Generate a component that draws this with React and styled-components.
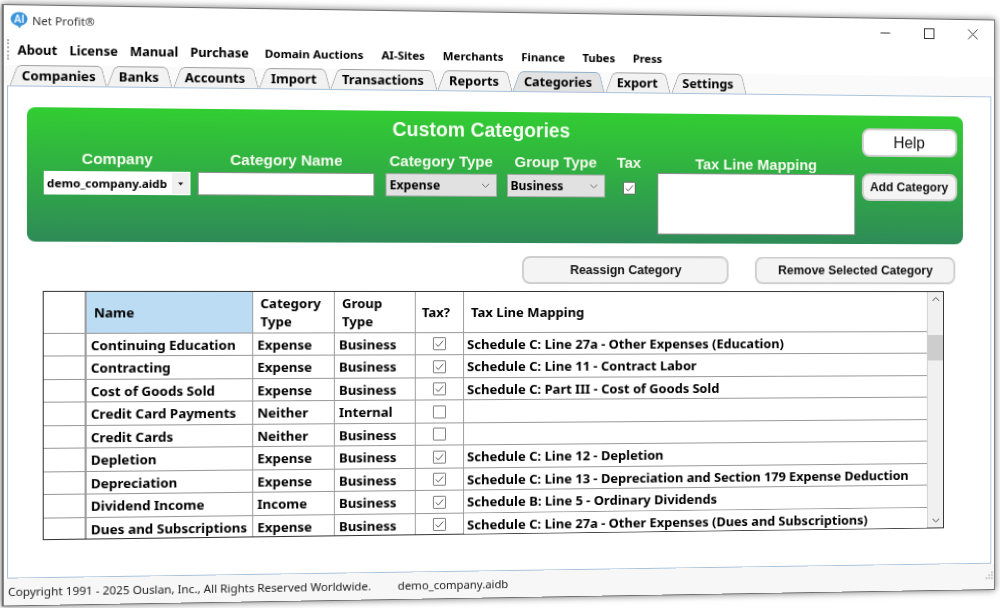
import React from "react";
import styled, { createGlobalStyle } from "styled-components";

const UI_FONT = `"Noto Sans", "Open Sans", sans-serif`;
const ARIAL = `"Liberation Sans", Arial, sans-serif`;

const MENU_MAIN = ["About", "License", "Manual", "Purchase"];
const MENU_MORE = ["Domain Auctions", "AI-Sites", "Merchants", "Finance", "Tubes", "Press"];
const TABS = ["Companies", "Banks", "Accounts", "Import", "Transactions", "Reports", "Categories", "Export", "Settings"];

const ROWS = [
  ["Continuing Education", "Expense", "Business", true, "Schedule C: Line 27a - Other Expenses (Education)"],
  ["Contracting", "Expense", "Business", true, "Schedule C: Line 11 - Contract Labor"],
  ["Cost of Goods Sold", "Expense", "Business", true, "Schedule C: Part III - Cost of Goods Sold"],
  ["Credit Card Payments", "Neither", "Internal", false, ""],
  ["Credit Cards", "Neither", "Business", false, ""],
  ["Depletion", "Expense", "Business", true, "Schedule C: Line 12 - Depletion"],
  ["Depreciation", "Expense", "Business", true, "Schedule C: Line 13 - Depreciation and Section 179 Expense Deduction"],
  ["Dividend Income", "Income", "Business", true, "Schedule B: Line 5 - Ordinary Dividends"],
  ["Dues and Subscriptions", "Expense", "Business", true, "Schedule C: Line 27a - Other Expenses (Dues and Subscriptions)"],
];

const GlobalStyle = createGlobalStyle`
  html, body {
    margin: 0;
    width: 1000px;
    height: 608px;
    overflow: hidden;
    background: #fff;
  }
  * { box-sizing: border-box; }
`;

// the screenshot was taken at a slight angle
const Window = styled.div`
  width: 996px;
  height: 585.5px;
  margin: 11.5px 0 0 14px;
  display: flex;
  flex-direction: column;
  background: #fff;
  border: 1px solid #6f6f6f;
  border-left-width: 2px;
  box-shadow: 0 0 7px rgba(0, 0, 0, 0.55);
  font-family: ${UI_FONT};
  color: #000;
  transform-origin: 50% 283.5px;
  transform: perspective(1500px) rotateY(4.73deg);
`;

const TitleBar = styled.div`
  height: 28px;
  display: flex;
  align-items: center;
  padding-left: 6px;
  font-size: 11.2px;
  color: #333;
`;

const TitleText = styled.span`
  margin-left: 4px;
  flex: 1;
`;

const WinButton = styled.div`
  width: 46px;
  height: 28px;
  display: flex;
  align-items: center;
  justify-content: center;
`;

const MenuBar = styled.div`
  height: 30px;
  display: flex;
  align-items: center;
  padding-left: 3px;
`;

const Gripper = styled.div`
  width: 2px;
  height: 20px;
  margin-right: 8px;
  border-left: 2px dotted #b4b4b4;
`;

const MenuItem = styled.span`
  font-weight: 700;
  font-size: ${(p) => (p.$small ? "11.4px" : "12.5px")};
  margin-right: ${(p) => (p.$small ? "17.8px" : "11.5px")};
  white-space: nowrap;
`;

const MenuSpacer = styled.span`
  width: 4px;
`;

const TabStrip = styled.div`
  height: 20px;
  display: flex;
  padding-left: 5px;
  background: #fafafa;
`;

const Tab = styled.div`
  position: relative;
  isolation: isolate;
  height: 20px;
  padding: 0 13px 0 12px;
  display: flex;
  align-items: center;
  font-size: 12.8px;
  font-weight: 700;
  white-space: nowrap;

  &:first-child {
    padding-right: 10px;
  }

  &::before,
  &::after {
    content: "";
    position: absolute;
    z-index: -1;
    top: 0;
    bottom: 0;
    width: 60%;
    background: ${(p) => (p.$active ? "#e2e2e2" : "#f2f2f2")};
    border-top: 1px solid ${(p) => (p.$active ? "#8fb0cc" : "#a2a2a2")};
  }
  &::before {
    left: 4px;
    border-left: 1px solid ${(p) => (p.$active ? "#8fb0cc" : "#a2a2a2")};
    border-radius: 5px 0 0 0;
    transform: skewX(-20deg);
  }
  &::after {
    right: 2px;
    border-right: 1px solid ${(p) => (p.$active ? "#8fb0cc" : "#a2a2a2")};
    border-radius: 0 5px 0 0;
    transform: skewX(14deg);
  }
`;

const Page = styled.div`
  height: 480px;
  margin: 0 3px;
  padding: 20px 29px 0 17.5px;
  border: 1px solid #a9c2da;
  background: #fff;
`;

const Card = styled.div`
  height: 130.5px;
  display: flex;
  padding: 6px 6.5px 0 16.5px;
  border-radius: 8px;
  background: linear-gradient(#32cd32, #2e8b57);
`;

const CardMain = styled.div`
  flex: 1;
`;

const CardTitle = styled.div`
  height: 24px;
  padding-left: 40px;
  text-align: center;
  font: 700 19.4px/24px ${ARIAL};
  color: #f6fbf2;
`;

const Fields = styled.div`
  margin-top: 8px;
  display: flex;
`;

const Field = styled.div`
  width: ${(p) => p.$w}px;
  margin-right: ${(p) => p.$gap || 0}px;
  display: flex;
  flex-direction: column;
  align-items: ${(p) => (p.$center ? "center" : "stretch")};
`;

const FieldLabel = styled.div`
  height: 24px;
  text-align: center;
  white-space: nowrap;
  font: 700 15px/${(p) => p.$line || 23}px ${ARIAL};
  color: #f4f9ee;
`;

const Combo = styled.div`
  height: 23px;
  padding-left: 3px;
  display: flex;
  align-items: center;
  justify-content: space-between;
  background: #fff;
  font-size: 11.3px;
  font-weight: 700;
`;

const ComboArrow = styled.div`
  width: 17px;
  height: 21px;
  margin-right: 1px;
  display: flex;
  align-items: center;
  justify-content: center;
  background: #f0f0f0;
`;

const Select = styled.div`
  height: 23px;
  padding: 0 6px 0 3px;
  display: flex;
  align-items: center;
  justify-content: space-between;
  background: #e1e1e1;
  border: 1px solid #a8a8a8;
  font-size: 12.2px;
  font-weight: 700;
`;

const TextInput = styled.input`
  height: 23px;
  width: 100%;
  border: 1px solid #8f8f8f;
  background: #fff;
  outline: none;
`;

const TextArea = styled.textarea`
  display: block;
  width: 100%;
  height: 62px;
  margin-top: -2px;
  resize: none;
  border: 1px solid #8f8f8f;
  background: #fff;
  outline: none;
`;

const TaxBox = styled.div`
  margin-top: 3px;
`;

const CardButtons = styled.div`
  width: 100px;
  display: flex;
  flex-direction: column;
  gap: 17px;
  padding-top: 7px;
`;

const Button = styled.button`
  height: ${(p) => p.$h || 28}px;
  width: ${(p) => (p.$w ? `${p.$w}px` : "100%")};
  padding: 0;
  border: 2px solid #cfcfcf;
  border-radius: 8px;
  background: ${(p) => (p.$plain ? "#fff" : "#f4f4f4")};
  color: #111;
  font: ${(p) => (p.$plain ? "400 16px" : "700 12.5px")} ${ARIAL};
`;

const Actions = styled.div`
  margin-top: 13px;
  display: flex;
  justify-content: flex-end;
  gap: 27px;
  padding-right: 8px;
`;

const TableFrame = styled.div`
  margin: 7px 20px 0 15.5px;
  height: 243px;
  display: flex;
  border: 1px solid #333;
  border-width: 1.5px 1px 1.5px 1.5px;
  background: #fff;
`;

const Grid = styled.div`
  flex: 1;
  display: grid;
  grid-template-columns: 41px 161px 80px 80px 48px 1fr;
  grid-template-rows: 41px repeat(9, 22.5px);
  overflow: hidden;
`;

const Cell = styled.div`
  display: flex;
  align-items: center;
  justify-content: ${(p) => (p.$center ? "center" : "flex-start")};
  padding-left: ${(p) => (p.$center ? 0 : p.$pad || 4)}px;
  padding-top: ${(p) => (p.$head ? 0 : 1)}px;
  border-right: 1px solid #a0a0a0;
  border-bottom: 1.5px solid #989898;
  font-size: ${(p) => (p.$last ? "13.1px" : "13px")};
  font-weight: 700;
  line-height: 18px;
  white-space: nowrap;
  background: ${(p) => (p.$selected ? "#bcdcf4" : "#fff")};
  ${(p) => p.$last && "border-right: 0;"}
  ${(p) => p.$gutter && "border-right: 2px solid #9c9c9c;"}
`;

const Scrollbar = styled.div`
  width: 17px;
  display: flex;
  flex-direction: column;
  align-items: center;
  justify-content: space-between;
  position: relative;
  padding: 4px 0;
  background: #f0f0f0;
  border-left: 1px solid #d0d0d0;
`;

const ScrollThumb = styled.div`
  position: absolute;
  top: 44px;
  left: 0;
  right: 0;
  height: 26px;
  background: #cdcdcd;
`;

const StatusBar = styled.div`
  flex: 1;
  display: flex;
  align-items: center;
  padding-left: 4px;
  font-size: 11.3px;
  color: #222;
  background: #f7f7f7;
`;

const StatusCopy = styled.span`
  width: 378px;
  white-space: nowrap;
`;

const StatusFile = styled.span`
  flex: 1;
`;

const Chevron = ({ up, color = "#707070" }) => (
  <svg width="9" height="6" viewBox="0 0 9 6">
    <path d={up ? "M1 5 4.5 1.5 8 5" : "M1 1 4.5 4.5 8 1"} fill="none" stroke={color} strokeWidth="1" />
  </svg>
);

const CheckBox = ({ checked, size = 13, color = "#666" }) => (
  <svg width={size} height={size} viewBox="0 0 13 13">
    <rect x="0.5" y="0.5" width="12" height="12" rx="0.5" fill="#fff" stroke={color} />
    {checked && <path d="M2.8 6.6 5.3 9.2 10.2 3.6" fill="none" stroke="#555" strokeWidth="1" />}
  </svg>
);

const Logo = () => (
  <svg width="17" height="17" viewBox="0 0 17 17">
    <ellipse cx="8.5" cy="7.2" rx="8" ry="6.7" fill="#3b94d9" />
    <path d="M6.2 12.5h5L9 16.6Z" fill="#3b94d9" />
    <text x="8.5" y="11" textAnchor="middle" fontFamily={ARIAL} fontWeight="700" fontSize="10" fill="#eaf6ff">
      AI
    </text>
  </svg>
);

const Grip = () => (
  <svg width="12" height="12" viewBox="0 0 12 12">
    {[[9, 1], [6, 4], [9, 4], [3, 7], [6, 7], [9, 7]].map(([x, y]) => (
      <rect key={`${x}-${y}`} x={x} y={y} width="1.5" height="1.5" fill="#a8a8a8" />
    ))}
  </svg>
);

export default function App() {
  return (
    <>
      <GlobalStyle />
      <Window>
        <TitleBar>
          <Logo />
          <TitleText>Net Profit®</TitleText>
          <WinButton>
            <svg width="11" height="11" viewBox="0 0 11 11">
              <path d="M0.5 5.5h10" stroke="#333" />
            </svg>
          </WinButton>
          <WinButton>
            <svg width="11" height="11" viewBox="0 0 11 11">
              <rect x="0.5" y="0.5" width="10" height="10" fill="none" stroke="#333" />
            </svg>
          </WinButton>
          <WinButton>
            <svg width="11" height="11" viewBox="0 0 11 11">
              <path d="M0.5 0.5l10 10M10.5 0.5l-10 10" stroke="#333" />
            </svg>
          </WinButton>
        </TitleBar>

        <MenuBar>
          <Gripper />
          {MENU_MAIN.map((m) => (
            <MenuItem key={m}>{m}</MenuItem>
          ))}
          <MenuSpacer />
          {MENU_MORE.map((m) => (
            <MenuItem key={m} $small>
              {m}
            </MenuItem>
          ))}
        </MenuBar>

        <TabStrip>
          {TABS.map((t) => (
            <Tab key={t} $active={t === "Categories"}>
              {t}
            </Tab>
          ))}
        </TabStrip>

        <Page>
          <Card>
            <CardMain>
              <CardTitle>Custom Categories</CardTitle>
              <Fields>
                <Field $w={141} $gap={7}>
                  <FieldLabel>Company</FieldLabel>
                  <Combo>
                    demo_company.aidb
                    <ComboArrow>
                      <svg width="7" height="4" viewBox="0 0 7 4">
                        <path d="M1 0.5h5L3.5 3.5Z" fill="#222" />
                      </svg>
                    </ComboArrow>
                  </Combo>
                </Field>
                <Field $w={173} $gap={11}>
                  <FieldLabel>Category Name</FieldLabel>
                  <TextInput />
                </Field>
                <Field $w={110.5} $gap={10}>
                  <FieldLabel>Category Type</FieldLabel>
                  <Select>
                    Expense
                    <Chevron />
                  </Select>
                </Field>
                <Field $w={99}>
                  <FieldLabel>Group Type</FieldLabel>
                  <Select>
                    Business
                    <Chevron />
                  </Select>
                </Field>
                <Field $w={49} $gap={4} $center>
                  <FieldLabel>Tax</FieldLabel>
                  <TaxBox>
                    <CheckBox checked />
                  </TaxBox>
                </Field>
                <Field $w={204}>
                  <FieldLabel $line={25}>Tax Line Mapping</FieldLabel>
                  <TextArea />
                </Field>
              </Fields>
            </CardMain>
            <CardButtons>
              <Button $plain $h={29}>
                Help
              </Button>
              <Button>Add Category</Button>
            </CardButtons>
          </Card>

          <Actions>
            <Button $w={210}>Reassign Category</Button>
            <Button $w={209}>Remove Selected Category</Button>
          </Actions>

          <TableFrame>
            <Grid>
              <Cell $gutter $head />
              <Cell $selected $head $pad={7}>Name</Cell>
              <Cell $head $pad={7}>
                Category
                <br />
                Type
              </Cell>
              <Cell $head $pad={7}>
                Group
                <br />
                Type
              </Cell>
              <Cell $head $pad={6}>Tax?</Cell>
              <Cell $last $head $pad={7}>Tax Line Mapping</Cell>
              {ROWS.map(([name, type, group, tax, line]) => (
                <React.Fragment key={name}>
                  <Cell $gutter />
                  <Cell>{name}</Cell>
                  <Cell>{type}</Cell>
                  <Cell>{group}</Cell>
                  <Cell $center>
                    <CheckBox checked={tax} color="#808080" />
                  </Cell>
                  <Cell $last $pad={3}>{line}</Cell>
                </React.Fragment>
              ))}
            </Grid>
            <Scrollbar>
              <Chevron up color="#444" />
              <ScrollThumb />
              <Chevron color="#444" />
            </Scrollbar>
          </TableFrame>
        </Page>

        <StatusBar>
          <StatusCopy>Copyright 1991 - 2025 Ouslan, Inc., All Rights Reserved Worldwide.</StatusCopy>
          <StatusFile>demo_company.aidb</StatusFile>
          <Grip />
        </StatusBar>
      </Window>
    </>
  );
}
